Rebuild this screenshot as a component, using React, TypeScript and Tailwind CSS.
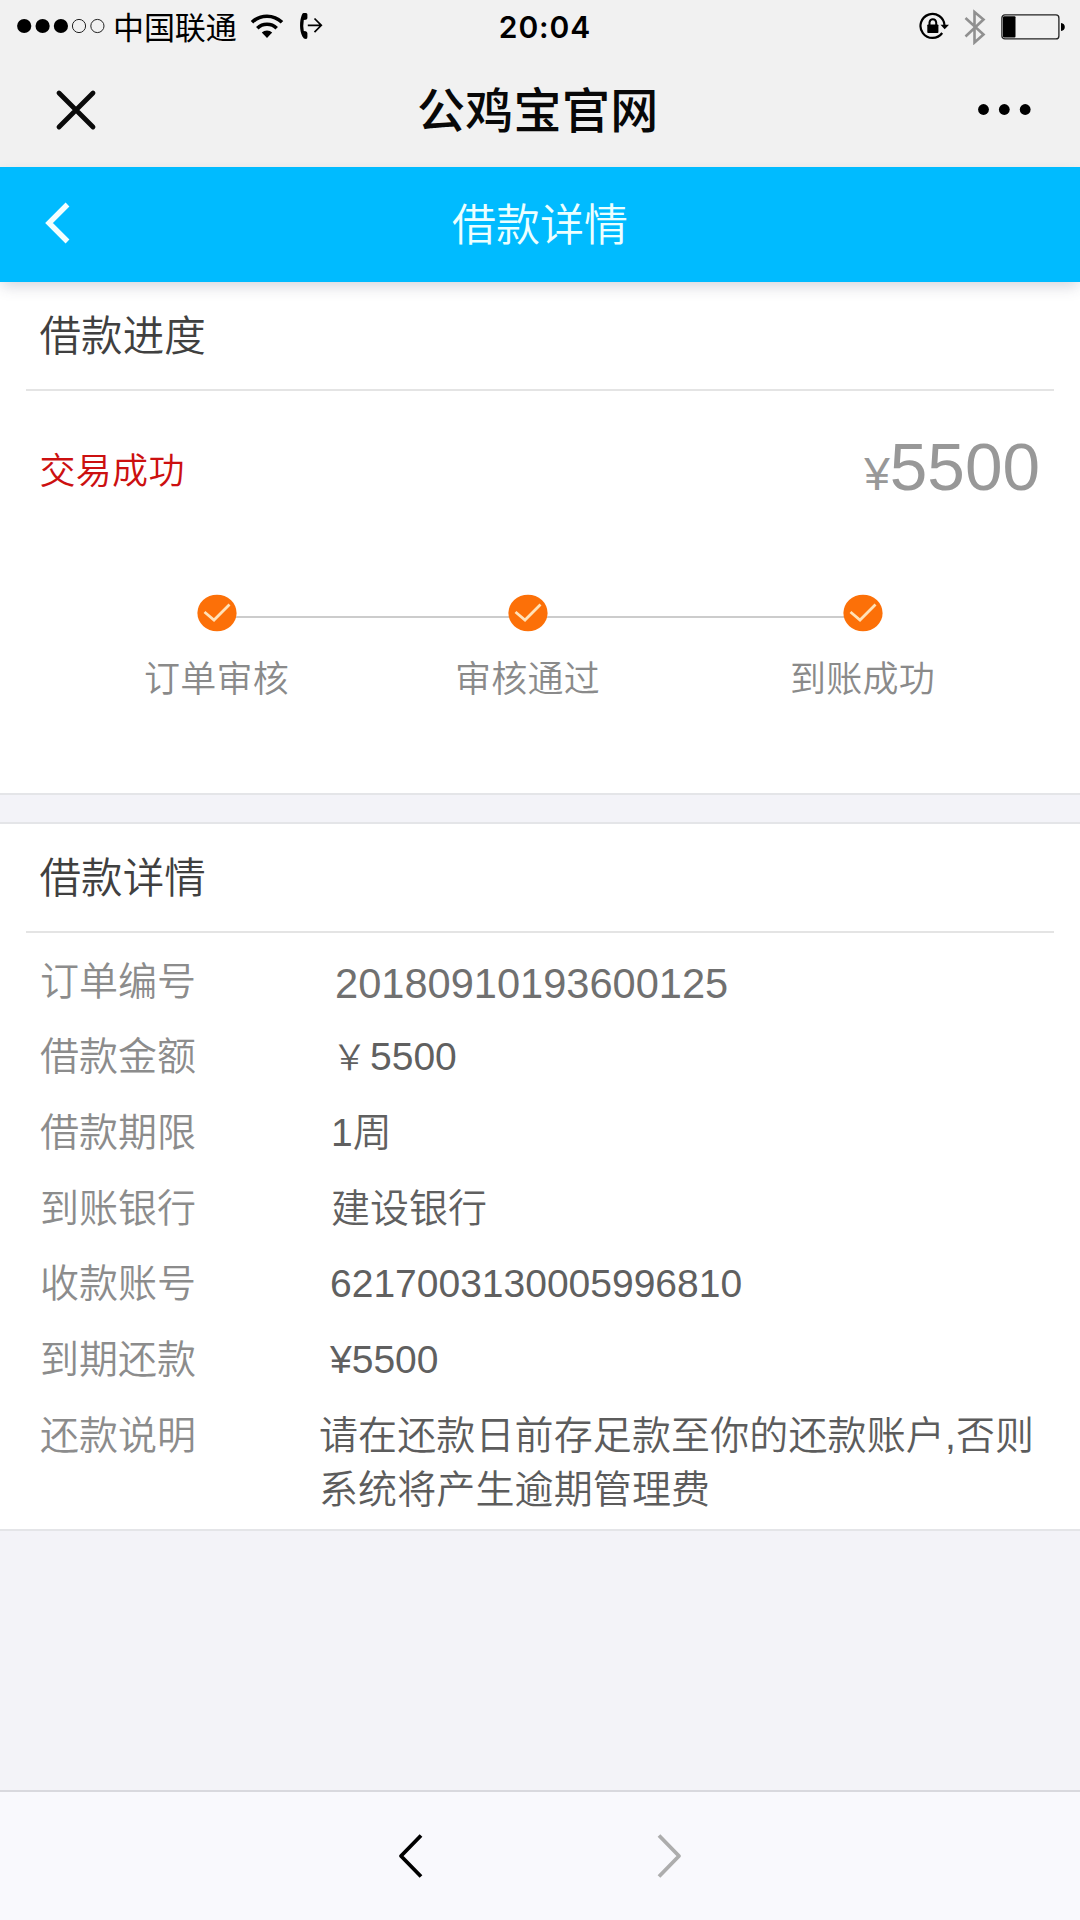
import type { ReactNode } from "react";

const cjk = "font-['Noto_Sans_CJK_SC',sans-serif]";
const arial = "font-['Liberation_Sans','Noto_Sans_CJK_SC',sans-serif]";

function StatusBar() {
  return (
    <div className="flex h-[54px] items-center pl-[17px] pr-[15px]">
      <div className="flex flex-1 items-center">
        <svg width="88" height="16" viewBox="0 0 88 16" className="-mt-[2px]">
          <circle cx="7.2" cy="8" r="7.1" />
          <circle cx="25.6" cy="8" r="7.1" />
          <circle cx="43.9" cy="8" r="7.1" />
          <circle cx="62" cy="8" r="6.6" fill="none" stroke="#222" strokeWidth="1" />
          <circle cx="80.4" cy="8" r="6.6" fill="none" stroke="#222" strokeWidth="1" />
        </svg>
        <span className={`${cjk} -mt-[2px] ml-[8px] w-[124px] text-[31px] leading-[50px] tracking-[-0.1px] whitespace-nowrap`}>中国联通</span>
        <svg width="34" height="26" viewBox="0 0 34 26" className="-mt-[2px] ml-[13px]">
          <path d="M2 9.3 A21.5 21.5 0 0 1 32 9.3" fill="none" stroke="#000" strokeWidth="3.6" />
          <path d="M7.3 15.2 A14 14 0 0 1 26.7 15.2" fill="none" stroke="#000" strokeWidth="3.6" />
          <path d="M11.8 19.6 A7.5 7.5 0 0 1 22.2 19.6 L17 25 Z" />
        </svg>
        <svg width="24" height="28" viewBox="0 0 24 28" className="-mt-[2px] ml-[15px]">
          <path d="M4.5 1 H7 Q8.400 1 8.400 2.600 V6 Q8.400 7.600 6.700 7.800 L4.800 8 Q3.800 13.500 4.800 19 L6.700 19.300 Q8.400 19.600 8.400 21.200 V25 Q8.400 27 7 27 Q4.700 27 3.400 24.500 C.4 18.500 .4 9 2.800 3 Q3.500 1 4.500 1 Z" />
          <path d="M8.800 13.300 H22 M15.500 6.500 L22.300 13.300 L15.500 20.100" fill="none" stroke="#000" strokeWidth="1.7" />
        </svg>
      </div>
      <span className="-mt-[1px] w-[94px] translate-x-[4px] text-center font-['Inter',sans-serif] text-[30px] leading-[50px] font-semibold tracking-[0.9px]">20:04</span>
      <div className="flex flex-1 items-center justify-end">
        <svg width="32" height="28" viewBox="0 0 32 28" className="-mt-[2px]">
          <path d="M25.5 13.500 A12 12 0 1 0 23.200 21" fill="none" stroke="#000" strokeWidth="2.2" />
          <path d="M21.500 12.800 H30 L25.700 17.200 Z" />
          <rect x="8.300" y="12.500" width="11.100" height="8.500" rx="0.8" />
          <path d="M10.500 13 V10.300 A3.400 3.700 0 0 1 17.200 10.300 V13" fill="none" stroke="#000" strokeWidth="2" />
        </svg>
        <svg width="22" height="36" viewBox="0 0 22 36" className="-mt-[1px] ml-[13px]">
          <path d="M1.500 9 L19.500 25.500 L10.500 33.500 V3 L19.500 10.500 L1.500 27.500" fill="none" stroke="#909090" strokeWidth="2.600" />
        </svg>
        <svg width="64" height="26" viewBox="0 0 64 26" className="-mt-[1px] ml-[15px]">
          <rect x="0.9" y="0.9" width="57" height="24" rx="3" fill="none" stroke="#222" strokeWidth="1.300" />
          <rect x="2" y="2.200" width="12.500" height="21.300" rx="1" />
          <path d="M60 9 Q63.800 9.500 63.800 13 Q63.800 16.500 60 17 Z" />
        </svg>
      </div>
    </div>
  );
}

function BrowserBar() {
  return (
    <div className="flex h-[112px] items-center pr-[47px] pl-[55px]">
      <svg width="42" height="42" viewBox="0 0 42 42" className="-mt-[1px]">
        <path d="M4 4 L38 38 M38 4 L4 38" stroke="#0a0a0a" strokeWidth="4.800" strokeLinecap="round" />
      </svg>
      <h1 className={`${cjk} -mt-[6px] ml-[320px] text-[48px] leading-[64px] font-medium tracking-[0.3px] whitespace-nowrap text-[#080808]`}>公鸡宝官网</h1>
      <svg width="56" height="14" viewBox="0 0 56 14" className="ml-auto">
        <circle cx="6.500" cy="6.500" r="5.400" />
        <circle cx="27.300" cy="6.500" r="5.400" />
        <circle cx="48.200" cy="6.500" r="5.400" />
      </svg>
    </div>
  );
}

function SectionTitle({ children }: { children: ReactNode }) {
  return (
    <div className="mx-[26px] border-b-2 border-[#e4e4e4] pl-[13.500px]">
      <h2 className={`${cjk} h-[107px] pt-[21px] text-[41.500px] leading-[60px] font-[350] tracking-[0.1px] text-[#404040]`}>{children}</h2>
    </div>
  );
}

function Step({ label }: { label: string }) {
  return (
    <div className="flex w-[146px] flex-col items-center">
      <svg width="42" height="38" viewBox="0 0 42 38">
        <ellipse cx="21" cy="19" rx="19.600" ry="18.300" fill="#fc7008" />
        <path d="M8.500 18 L18 26 L33.500 10.500" fill="none" stroke="#ffe2b8" strokeWidth="2.800" />
      </svg>
      <span className={`${cjk} mt-[18px] -ml-[1px] text-[36px] leading-[52px] font-[350] tracking-[0.2px] whitespace-nowrap text-[#8a8a8a]`}>{label}</span>
    </div>
  );
}

const rows: { label: string; value: ReactNode; style: string }[] = [
  { label: "订单编号", value: "20180910193600125", style: "pl-[15px] pt-[6px] text-[41.600px] text-[#707070]" },
  {
    label: "借款金额",
    value: (
      <>
        <span className="mr-[3px] text-[35px]">￥</span>5500
      </>
    ),
    style: "pl-[12px] pt-[4px] text-[39px] text-[#606060]",
  },
  { label: "借款期限", value: "1周", style: "pl-[11px] pt-[4px] text-[39px] text-[#606060]" },
  { label: "到账银行", value: "建设银行", style: "pl-[11px] pt-[4px] text-[39px] text-[#606060]" },
  { label: "收款账号", value: "6217003130005996810", style: "pl-[10px] pt-[4px] text-[39px] text-[#606060]" },
  { label: "到期还款", value: "¥5500", style: "pl-[10px] pt-[4px] text-[39px] text-[#606060]" },
];

function Label({ children }: { children: ReactNode }) {
  return <span className={`${cjk} w-[280px] shrink-0 text-[39px] leading-[54.500px] font-[350] text-[#8c8c8c]`}>{children}</span>;
}

export default function App() {
  return (
    <div className={`${arial} flex h-[1920px] w-[1080px] flex-col overflow-hidden bg-[#f3f3f8] text-black`}>
      <div className="h-[167px] shrink-0 bg-[#f1f1f1]">
        <StatusBar />
        <BrowserBar />
      </div>

      <header className="relative z-10 flex h-[115px] shrink-0 items-center bg-[#00bbff] pl-[44px] shadow-[0_6px_14px_-2px_rgba(60,60,90,0.22)]">
        <svg width="30" height="44" viewBox="0 0 30 44" className="-mt-[3px]">
          <path d="M23.500 3.500 L5 22 L23.500 40.500" fill="none" stroke="#f4ffff" strokeWidth="5.400" />
        </svg>
        <h2 className={`${cjk} -mt-[5px] ml-[378px] text-[44px] leading-[60px] font-[350] text-[#ecffff]`}>借款详情</h2>
      </header>

      <section className="h-[513px] shrink-0 border-b-2 border-[#e4e5e8] bg-white">
        <SectionTitle>借款进度</SectionTitle>
        <div className="flex h-[153px] items-center justify-between pr-[40px] pl-[39.500px]">
          <span className={`${cjk} text-[36px] leading-[52px] font-[350] tracking-[0.3px] text-[#cc1010]`}>交易成功</span>
          <span className="flex translate-y-[3px] items-baseline text-[#989898]">
            <span className="text-[46px] leading-[80px]">¥</span>
            <span className="text-[67.500px] leading-[80px]">5500</span>
          </span>
        </div>
        <div className="mt-[50px] flex pl-[144px]">
          <Step label="订单审核" />
          <div className="-mx-[54px] mt-[22px] h-[2px] w-[273px] bg-[#cccccc]" />
          <Step label="审核通过" />
          <div className="-mx-[54px] mt-[22px] h-[2px] w-[297px] bg-[#cccccc]" />
          <Step label="到账成功" />
        </div>
      </section>

      <section className="mt-[27px] h-[709px] shrink-0 border-t-2 border-b-2 border-[#e4e5e8] bg-white">
        <SectionTitle>借款详情</SectionTitle>
        <div className="pt-[17.500px] pl-[40px]">
          {rows.map((row) => (
            <div key={row.label} className="flex h-[75.700px]">
              <Label>{row.label}</Label>
              <span className={`${row.style} leading-[54.500px] font-[350] whitespace-nowrap`}>{row.value}</span>
            </div>
          ))}
          <div className="flex">
            <Label>还款说明</Label>
            <p className="-ml-px pt-[4px] text-[39px] leading-[54.500px] font-[350] tracking-[0.120px] whitespace-nowrap text-[#5c5c5c]">
              请在还款日前存足款至你的还款账户,否则
              <br />
              系统将产生逾期管理费
            </p>
          </div>
        </div>
      </section>

      <nav className="mt-auto flex h-[130px] shrink-0 items-center gap-[232px] border-t-2 border-[#d9d9de] bg-[#f9f9fd] pl-[397px]">
        <svg width="28" height="46" viewBox="0 0 28 46">
          <path d="M24 2.500 L4 23 L24 43.500" fill="none" stroke="#000" strokeWidth="3.800" strokeLinejoin="round" />
        </svg>
        <svg width="28" height="46" viewBox="0 0 28 46">
          <path d="M2 2.500 L22 23 L2 43.500" fill="none" stroke="#adadad" strokeWidth="3.800" strokeLinejoin="round" />
        </svg>
      </nav>
    </div>
  );
}
